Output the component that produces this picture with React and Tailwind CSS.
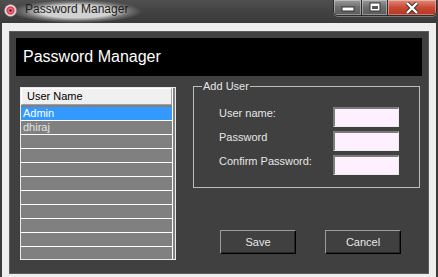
const rows = ['Admin', 'dhiraj', '', '', '', '', '', '', '', '', ''];

const fields = ['User name:', 'Password', 'Confirm Password:'];

function AppIcon() {
  return (
    <svg width="13" height="13" viewBox="0 0 13 13">
      <circle cx="6.5" cy="6.5" r="6" fill="#ece8e8" stroke="#8a7a7a" strokeWidth="0.8" />
      <circle cx="6.5" cy="6.5" r="4.2" fill="#e0405a" />
      <circle cx="6.5" cy="6.5" r="2.4" fill="#f07a8a" />
      <circle cx="6.5" cy="6.5" r="1.2" fill="#5a1010" />
    </svg>
  );
}

function CaptionButtons() {
  return (
    <div className="ml-auto mr-[1px] flex h-[16px] rounded-b-[5px] border border-t-0 border-[#2e2e2e] overflow-hidden shadow-[0_1px_0_#7a7a7a]">
      <div className="w-[28px] flex items-center justify-center bg-linear-to-b from-[#9a9a9a] via-[#6e6e6e] to-[#5a5a5a] border-r border-[#2e2e2e] shadow-[inset_0_0_0_1px_rgba(255,255,255,0.35)]">
        <svg width="14" height="10" viewBox="0 0 14 10">
          <rect x="1" y="4" width="12" height="4" fill="#fff" stroke="#333" strokeWidth="1" />
        </svg>
      </div>
      <div className="w-[26px] flex items-center justify-center bg-linear-to-b from-[#9a9a9a] via-[#6e6e6e] to-[#5a5a5a] border-r border-[#2e2e2e] shadow-[inset_0_0_0_1px_rgba(255,255,255,0.35)]">
        <svg width="12" height="11" viewBox="0 0 12 11">
          <rect x="1" y="1" width="10" height="8" fill="#fff" stroke="#333" strokeWidth="1" />
          <rect x="3" y="4" width="6" height="3" fill="#555" />
        </svg>
      </div>
      <div className="w-[48px] flex items-center justify-center bg-linear-to-b from-[#e08a78] via-[#c84a35] to-[#b8321f] shadow-[inset_0_0_0_1px_rgba(255,255,255,0.35)]">
        <svg width="14" height="12" viewBox="0 0 14 12">
          <path d="M2 1 L12 11 M12 1 L2 11" stroke="#333" strokeWidth="4.2" />
          <path d="M2 1 L12 11 M12 1 L2 11" stroke="#fff" strokeWidth="2.4" />
        </svg>
      </div>
    </div>
  );
}

function UserList() {
  return (
    <div className="ml-[4px] mt-[11px] w-[156px] h-[173px] border border-[#ece6f0] bg-[#808080] overflow-hidden">
      <div className="w-[152px] h-full border-r border-white">
        <div className="h-[17px] mb-[2px] bg-[#f0f0f0] border border-t-white border-l-white border-b-[#a0a0a0] border-r-[#a0a0a0] pl-[5px] text-[11px] leading-[15px] text-black">
          User Name
        </div>
        {rows.map((name, i) => (
          <div
            key={i}
            className={
              'h-[14px] border-b border-white pl-[2px] text-[11px] leading-[13px] ' +
              (i === 0 ? 'bg-[#3399ff] text-white' : 'text-[#e4e4e4]')
            }
          >
            {name}
          </div>
        ))}
      </div>
    </div>
  );
}

export default function App() {
  return (
    <div className="w-[438px] h-[277px] flex flex-col bg-[#3d3a38] px-[2px] overflow-hidden font-['Liberation_Sans',Arial,sans-serif]">
      {/* title bar */}
      <div className="h-[23px] -mx-[2px] flex items-start bg-linear-to-b from-[#505050] via-[#424242] to-[#3a3a3a]">
        <div className="ml-[4px] mt-[4px]">
          <AppIcon />
        </div>
        <div className="-ml-[6px] px-[14px] h-[23px] bg-[radial-gradient(closest-side,#d2d2d2_55%,rgba(170,170,170,0.45)_80%,transparent_100%)]">
          <div className="mt-[2px] text-[12px] leading-[15px] text-[#1e1e1e]">Password Manager</div>
        </div>
        <CaptionButtons />
      </div>

      {/* window frame */}
      <div className="flex-1 flex bg-[#eeeeee] px-[7px] pt-[8px] pb-[3px]">
        <div className="flex-1 flex flex-col border border-[#5c5c5c] bg-[#404040] p-[6px]">
          <div className="h-[38px] flex items-center bg-black pl-[7px] text-[16px] text-white">
            Password Manager
          </div>

          <div className="flex items-start">
            <UserList />

            <div className="ml-[17px] mt-[10px] flex flex-col">
              <div className="relative w-[227px] border border-[#bcbcbc] pl-[25px] pr-[20px] pt-[20px] pb-[12px]">
                <div className="absolute left-[8px] top-[-7px] px-[1px] bg-[#404040] text-[11px] leading-[13px] text-[#e6e6e6]">
                  Add User
                </div>
                <div className="flex flex-col gap-[4px]">
                  {fields.map((f) => (
                    <div key={f} className="flex items-start justify-between h-[20px]">
                      <span className="text-[11px] leading-[13px] text-[#e6e6e6]">{f}</span>
                      <input
                        type="text"
                        className="w-[66px] h-[20px] bg-[#fff0ff] border-t-2 border-l-2 border-b border-r border-t-[#7c7c7c] border-l-[#7c7c7c] border-b-[#ececec] border-r-[#ececec] outline-none"
                      />
                    </div>
                  ))}
                </div>
              </div>

              <div className="mt-[42px] pl-[27px] flex gap-[29px]">
                <button className="w-[76px] h-[24px] bg-[#404040] border border-t-[#9c9c9c] border-l-[#9c9c9c] border-b-black border-r-black shadow-[inset_-1px_-1px_0_#262626] text-[11px] text-[#e8e8e8]">
                  Save
                </button>
                <button className="w-[76px] h-[24px] bg-[#404040] border border-t-[#9c9c9c] border-l-[#9c9c9c] border-b-black border-r-black shadow-[inset_-1px_-1px_0_#262626] text-[11px] text-[#e8e8e8]">
                  Cancel
                </button>
              </div>
            </div>
          </div>
        </div>
      </div>
    </div>
  );
}
